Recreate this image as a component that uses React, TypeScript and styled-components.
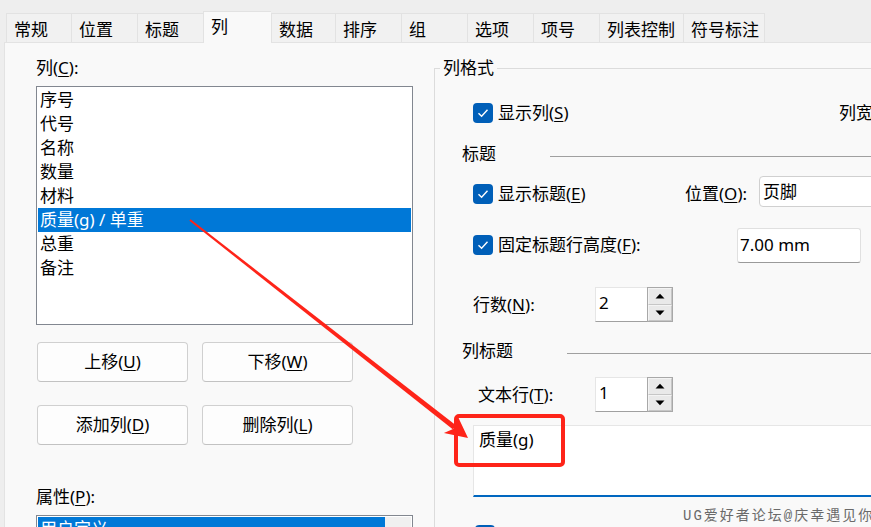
import React from 'react';
import styled, { createGlobalStyle } from 'styled-components';

const GlobalStyle = createGlobalStyle`
  html, body {
    margin: 0;
    padding: 0;
  }
  body {
    background: #eeeeee;
    font-family: "Noto Sans", "Noto Sans CJK SC", sans-serif;
    font-size: 17px;
    color: #000;
  }
`;

const tabs = [
  { label: '常规', w: 65 },
  { label: '位置', w: 66 },
  { label: '标题', w: 66 },
  { label: '列', w: 68, active: true },
  { label: '数据', w: 64 },
  { label: '排序', w: 66 },
  { label: '组', w: 66 },
  { label: '选项', w: 66 },
  { label: '项号', w: 66 },
  { label: '列表控制', w: 84 },
  { label: '符号标注', w: 82 },
];

const columns = ['序号', '代号', '名称', '数量', '材料', '质量(g) / 单重', '总重', '备注'];

function Check() {
  return (
    <CheckBox>
      <svg width="12" height="10" viewBox="0 0 12 10">
        <path d="M1.5 5.2 L4.6 8.2 L10.5 1.8" fill="none" stroke="#fff" strokeWidth="1.4" />
      </svg>
    </CheckBox>
  );
}

function Spin({ value }: { value: string }) {
  return (
    <SpinWrap>
      <SpinInput>{value}</SpinInput>
      <SpinButtons>
        <SpinBtn>
          <svg width="10" height="6" viewBox="0 0 10 6">
            <path d="M0.5 5.5 L5 0.8 L9.5 5.5 Z" fill="#000" />
          </svg>
        </SpinBtn>
        <SpinBtn>
          <svg width="10" height="6" viewBox="0 0 10 6">
            <path d="M0.5 0.5 L5 5.2 L9.5 0.5 Z" fill="#000" />
          </svg>
        </SpinBtn>
      </SpinButtons>
    </SpinWrap>
  );
}

export default function App() {
  return (
    <Page>
      <GlobalStyle />
      <TabBar>
        {tabs.map((t) => (
          <Tab key={t.label} $w={t.w} $active={!!t.active}>
            {t.label}
          </Tab>
        ))}
      </TabBar>

      <Body>
        <LeftPane>
          <FieldLabel $top={0}>
            列(<u>C</u>):
          </FieldLabel>
          <ListBox $h={239}>
            <ItemArea>
              {columns.map((c) => (
                <ListItem key={c} $selected={c.startsWith('质量')}>
                  {c}
                </ListItem>
              ))}
            </ItemArea>
          </ListBox>

          <ButtonGrid>
            <Button>上移(<u>U</u>)</Button>
            <Button>下移(<u>W</u>)</Button>
            <Button>添加列(<u>D</u>)</Button>
            <Button>删除列(<u>L</u>)</Button>
          </ButtonGrid>

          <FieldLabel $top={42}>
            属性(<u>P</u>):
          </FieldLabel>
          <ListBox $h={120}>
            <ItemArea>
              <ListItem $selected>用户定义</ListItem>
            </ItemArea>
            <ScrollTrack />
          </ListBox>
        </LeftPane>

        <GroupBox>
          <Legend>列格式</Legend>

          <Row $top={25} $h={20} $indent={38}>
            <CheckField $w={366}>
              <Check />
              <span>显示列(<u>S</u>)</span>
            </CheckField>
            <Text>列宽(<u>W</u>):</Text>
          </Row>

          <SectionHead $top={21}>
            <span>标题</span>
            <Rule />
          </SectionHead>

          <Row $top={20} $h={20} $indent={38}>
            <CheckField $w={212}>
              <Check />
              <span>显示标题(<u>E</u>)</span>
            </CheckField>
            <Text $w={74}>位置(<u>O</u>):</Text>
            <Combo>页脚</Combo>
          </Row>

          <Row $top={31} $h={20} $indent={38}>
            <CheckField $w={264}>
              <Check />
              <span>固定标题行高度(<u>F</u>):</span>
            </CheckField>
            <TextInput>7.00 mm</TextInput>
          </Row>

          <Row $top={32} $h={35} $indent={38}>
            <Text $w={122}>行数(<u>N</u>):</Text>
            <Spin value="2" />
          </Row>

          <SectionHead $top={19}>
            <span>列标题</span>
            <Rule />
          </SectionHead>

          <Row $top={16} $h={35} $indent={43}>
            <Text $w={117}>文本行(<u>T</u>):</Text>
            <Spin value="1" />
          </Row>

          <TextArea>质量(g)</TextArea>

          <Row $top={28} $h={20} $indent={40}>
            <Check />
          </Row>
        </GroupBox>
      </Body>

      <Arrow width="871" height="527" viewBox="0 0 871 527">
        <polygon
          points="189.4,220.8 190.6,219.2 456.2,425.5 453.0,429.5"
          fill="#fe2419"
        />
        <polygon
          points="468,438 443.9,433.1 455.4,428.1 457.5,415.7"
          fill="#fe2419"
        />
      </Arrow>
      <Highlight />
      <Watermark>UG爱好者论坛@庆幸遇见你</Watermark>
    </Page>
  );
}

const Page = styled.div`
  position: relative;
  width: 871px;
  height: 527px;
  overflow: hidden;
  background: #eeeeee;

  u {
    text-decoration-thickness: 1px;
    text-underline-offset: 2px;
  }
`;

const TabBar = styled.div`
  display: flex;
  align-items: flex-end;
  height: 42px;
  padding-left: 6px;
  box-sizing: border-box;
`;

const Tab = styled.div<{ $w: number; $active: boolean }>`
  position: relative;
  z-index: 1;
  flex: 0 0 ${(p) => p.$w}px;
  box-sizing: border-box;
  height: ${(p) => (p.$active ? 32 : 29)}px;
  margin-bottom: ${(p) => (p.$active ? -1 : 0)}px;
  padding: ${(p) => (p.$active ? 5 : 6)}px 0 0 7px;
  line-height: 20px;
  white-space: nowrap;
  background: ${(p) => (p.$active ? '#f9f9f9' : '#f1f1f1')};
  border: 1px solid #e2e2e2;
  border-bottom: none;
  border-right: none;

  &:last-child {
    border-right: 1px solid #e2e2e2;
  }
`;

const Body = styled.div`
  display: flex;
  margin-left: 4px;
  height: 485px;
  background: #f9f9f9;
  border-top: 1px solid #e3e3e3;
  border-left: 1px solid #e3e3e3;
`;

const LeftPane = styled.div`
  flex: 0 0 429px;
  box-sizing: border-box;
  padding: 15px 0 0 31px;
`;

const FieldLabel = styled.div<{ $top: number }>`
  height: 20px;
  line-height: 20px;
  margin-top: ${(p) => p.$top}px;
`;

const ListBox = styled.div<{ $h: number }>`
  display: flex;
  width: 377px;
  height: ${(p) => p.$h}px;
  margin-top: 8px;
  padding: 1px;
  box-sizing: border-box;
  background: #fff;
  border: 1px solid #828790;
`;

const ItemArea = styled.div`
  flex: 1;
`;

const ListItem = styled.div<{ $selected?: boolean }>`
  height: 24px;
  line-height: 24px;
  padding-left: 2px;
  white-space: nowrap;
  background: ${(p) => (p.$selected ? '#0078d7' : 'transparent')};
  color: ${(p) => (p.$selected ? '#fff' : '#000')};
`;

const ScrollTrack = styled.div`
  flex: 0 0 26px;
  background: #f0f0f0;
`;

const ButtonGrid = styled.div`
  display: grid;
  grid-template-columns: 151px 151px;
  grid-auto-rows: 40px;
  column-gap: 14px;
  row-gap: 23px;
  margin: 17px 0 0 1px;
`;

const Button = styled.div`
  display: flex;
  align-items: center;
  justify-content: center;
  background: #fdfdfd;
  border: 1px solid #d0d0d0;
  border-bottom-color: #c2c2c2;
  border-radius: 4px;
  line-height: 20px;
`;

const GroupBox = styled.fieldset`
  flex: 0 0 620px;
  margin: 15px 0 0 0;
  padding: 0;
  min-width: 0;
  border: 1px solid #dcdcdc;
  border-right: none;
  border-bottom: none;
`;

const Legend = styled.legend`
  margin-left: 5px;
  padding: 0 3px;
  line-height: 20px;
  height: 20px;
`;

const Row = styled.div<{ $top: number; $h: number; $indent: number }>`
  display: flex;
  align-items: center;
  height: ${(p) => p.$h}px;
  margin-top: ${(p) => p.$top}px;
  padding-left: ${(p) => p.$indent}px;
  line-height: 20px;
  white-space: nowrap;
`;

const CheckField = styled.div<{ $w: number }>`
  display: flex;
  align-items: center;
  gap: 5px;
  flex: 0 0 ${(p) => p.$w}px;
`;

const CheckBox = styled.div`
  display: flex;
  align-items: center;
  justify-content: center;
  flex: 0 0 20px;
  width: 20px;
  height: 20px;
  border-radius: 4px;
  background: #005fb8;
`;

const Text = styled.span<{ $w?: number }>`
  flex: 0 0 ${(p) => (p.$w ? `${p.$w}px` : 'auto')};
`;

const Combo = styled.div`
  flex: 0 0 200px;
  height: 31px;
  margin-bottom: 5px;
  box-sizing: border-box;
  padding-left: 3px;
  line-height: 29px;
  background: #fff;
  border: 1px solid #d0d0d0;
  border-radius: 4px;
`;

const TextInput = styled.div`
  flex: 0 0 124px;
  height: 35px;
  box-sizing: border-box;
  padding-left: 2px;
  line-height: 32px;
  background: #fff;
  border: 1px solid #e0e0e0;
  border-bottom-color: #9a9a9a;
  border-radius: 3px;
`;

const SectionHead = styled.div<{ $top: number }>`
  display: flex;
  align-items: center;
  height: 20px;
  margin-top: ${(p) => p.$top}px;
  padding-left: 27px;
  line-height: 20px;
`;

const Rule = styled.div`
  flex: 1;
  height: 1px;
  margin: 4px 0 0 54px;
  background: #a0a0a0;
`;

const SpinWrap = styled.div`
  display: flex;
  height: 35px;
`;

const SpinInput = styled.div`
  width: 52px;
  box-sizing: border-box;
  padding-left: 3px;
  line-height: 30px;
  background: #fff;
  border: 1px solid #e6e6e6;
  border-right: none;
  border-bottom-color: #a0a0a0;
`;

const SpinButtons = styled.div`
  display: flex;
  flex-direction: column;
  width: 26px;
  box-sizing: border-box;
  border: 1px solid #a8a8a8;
  background: #e9e9e9;
`;

const SpinBtn = styled.div`
  flex: 1;
  display: flex;
  align-items: center;
  justify-content: center;
  border: 1px solid #f4f4f4;
  border-bottom-color: #c6c6c6;
  border-right-color: #c6c6c6;
`;

const TextArea = styled.div`
  height: 72px;
  margin: 13px 0 0 38px;
  box-sizing: border-box;
  padding: 4px 0 0 5px;
  line-height: 20px;
  background: #fff;
  border: 1px solid #e6e6e6;
  border-right: none;
  border-bottom: 2px solid #0067c0;
`;

const Arrow = styled.svg`
  position: absolute;
  left: 0;
  top: 0;
  pointer-events: none;
`;

const Highlight = styled.div`
  position: absolute;
  left: 454px;
  top: 414px;
  width: 111px;
  height: 53px;
  box-sizing: border-box;
  border: 4px solid #fe2419;
  border-radius: 5px;
`;

const Watermark = styled.div`
  position: absolute;
  left: 683px;
  top: 507px;
  font-family: "Liberation Mono", "Noto Sans CJK SC", monospace;
  font-size: 14px;
  line-height: 18px;
  letter-spacing: 2px;
  color: #6a6a6a;
  white-space: nowrap;
`;
